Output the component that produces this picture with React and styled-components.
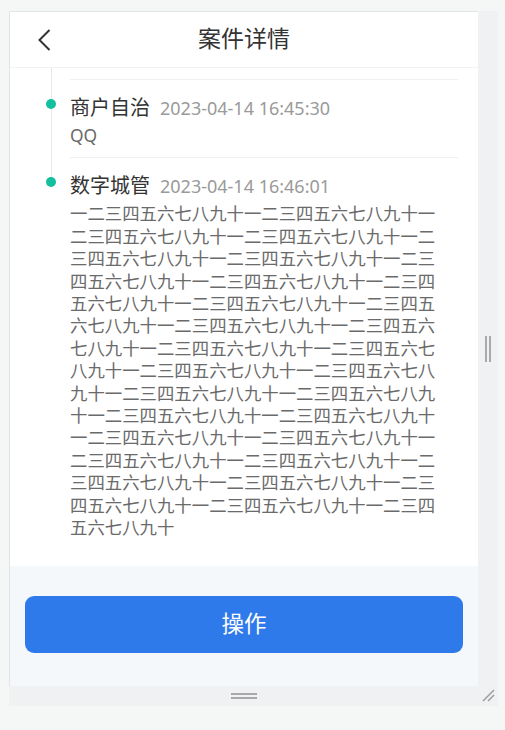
import React from "react";
import styled, { createGlobalStyle } from "styled-components";

const GlobalStyle = createGlobalStyle`
  html, body { margin: 0; padding: 0; }
  body {
    background: #f5f7f7;
    font-family: "Noto Sans", "Noto Sans CJK SC", sans-serif;
  }
`;

const Frame = styled.div`
  display: grid;
  grid-template-columns: 469px 20px;
  grid-template-rows: 675px 20px;
  margin: 11px 0 0 9px;
  width: 489px;
`;

const Screen = styled.div`
  display: flex;
  flex-direction: column;
  background: #fff;
  border-left: 1px solid #e3e4e4;
  border-top: 1px solid #e3e4e4;
  overflow: hidden;
`;

const Header = styled.header`
  box-sizing: border-box;
  height: 56px;
  flex: none;
  display: grid;
  grid-template-columns: 60px 1fr 60px;
  align-items: center;
  border-bottom: 1px solid #f2f2f2;
`;

const BackButton = styled.button`
  border: 0;
  background: none;
  padding: 0;
  margin-left: 27px;
  width: 14px;
  height: 22px;
  display: flex;
  align-items: center;
  justify-content: center;
  cursor: pointer;
`;

const Title = styled.h1`
  margin: 0;
  padding-bottom: 5px;
  text-align: center;
  font-size: 23px;
  font-weight: 400;
  color: #333;
`;

const Content = styled.main`
  flex: 1;
  overflow: hidden;
`;

const Item = styled.div`
  display: grid;
  grid-template-columns: 60px 1fr;
`;

const Rail = styled.div`
  display: flex;
  flex-direction: column;
  align-items: center;
  padding-left: 22px;
`;

const Segment = styled.div`
  width: 1px;
  background: #e8e8e8;
  height: ${(p) => (p.$h ? `${p.$h}px` : "auto")};
  flex: ${(p) => (p.$h ? "none" : "1")};
  visibility: ${(p) => (p.$hidden ? "hidden" : "visible")};
`;

const Dot = styled.span`
  width: 10px;
  height: 10px;
  border-radius: 50%;
  background: #13bf9f;
  flex: none;
`;

const Body = styled.div`
  margin: ${(p) => p.$lead}px 20px 0 0;
  border-top: 1px solid #f1f1f1;
  padding: 15px 0 11px;
`;

const TitleRow = styled.div`
  display: flex;
  align-items: baseline;
  line-height: 26px;
  white-space: nowrap;
`;

const Source = styled.span`
  font-size: 20px;
  color: #333;
`;

const Time = styled.span`
  font-size: 18px;
  color: #9a9a9a;
  margin-left: 10px;
`;

const Desc = styled.p`
  margin: 3px 0 0;
  padding-right: 12px;
  font-size: 17.4px;
  line-height: 22.4px;
  color: #6a6a6a;
  word-break: break-all;
`;

const Footer = styled.footer`
  flex: none;
  height: 120px;
  box-sizing: border-box;
  background: #f5f8fa;
  padding: 30px 15px 0;
`;

const ActionButton = styled.button`
  width: 100%;
  height: 57px;
  border: 0;
  border-radius: 9px;
  background: #2f7aea;
  color: #fff;
  font-family: "Noto Sans CJK SC", sans-serif;
  font-size: 22.5px;
  padding: 0 0 5px;
  cursor: pointer;
`;

const Gutter = styled.div`
  background: #f0f1f3;
  display: flex;
  align-items: center;
  justify-content: center;
  gap: 2px;
  flex-direction: ${(p) => (p.$vertical ? "column" : "row")};
`;

const GripBar = styled.span`
  background: #a9a9a9;
  width: ${(p) => (p.$horizontal ? "26px" : "2px")};
  height: ${(p) => (p.$horizontal ? "2px" : "26px")};
`;

const Corner = styled.div`
  background: #f0f1f3;
  display: flex;
  align-items: flex-end;
  justify-content: flex-end;
  padding: 0 3px 4px 0;
`;

const longText = "一二三四五六七八九十".repeat(30);

const items = [
  { source: "商户自治", time: "2023-04-14 16:45:30", desc: "QQ" },
  { source: "数字城管", time: "2023-04-14 16:46:01", desc: longText },
];

export default function App() {
  return (
    <>
      <GlobalStyle />
      <Frame>
        <Screen>
          <Header>
            <BackButton aria-label="返回">
              <svg width="13" height="22" viewBox="0 0 13 22">
                <polyline
                  points="11.5,1 1.5,11 11.5,21"
                  fill="none"
                  stroke="#333"
                  strokeWidth="2"
                />
              </svg>
            </BackButton>
            <Title>案件详情</Title>
            <span />
          </Header>
          <Content>
            {items.map((it, i) => {
              const lead = i === 0 ? 11 : 0;
              const last = i === items.length - 1;
              return (
                <Item key={i}>
                  <Rail>
                    <Segment $h={20 + lead} />
                    <Dot />
                    <Segment $hidden={last} />
                  </Rail>
                  <Body $lead={lead}>
                    <TitleRow>
                      <Source>{it.source}</Source>
                      <Time>{it.time}</Time>
                    </TitleRow>
                    <Desc>{it.desc}</Desc>
                  </Body>
                </Item>
              );
            })}
          </Content>
          <Footer>
            <ActionButton>操作</ActionButton>
          </Footer>
        </Screen>
        <Gutter>
          <GripBar />
          <GripBar />
        </Gutter>
        <Gutter $vertical>
          <GripBar $horizontal />
          <GripBar $horizontal />
        </Gutter>
        <Corner>
          <svg width="13" height="13" viewBox="0 0 13 13">
            <line x1="1" y1="12" x2="12" y2="1" stroke="#9a9a9a" strokeWidth="1.5" />
            <line x1="6" y1="12" x2="12" y2="6" stroke="#9a9a9a" strokeWidth="1.5" />
          </svg>
        </Corner>
      </Frame>
    </>
  );
}
